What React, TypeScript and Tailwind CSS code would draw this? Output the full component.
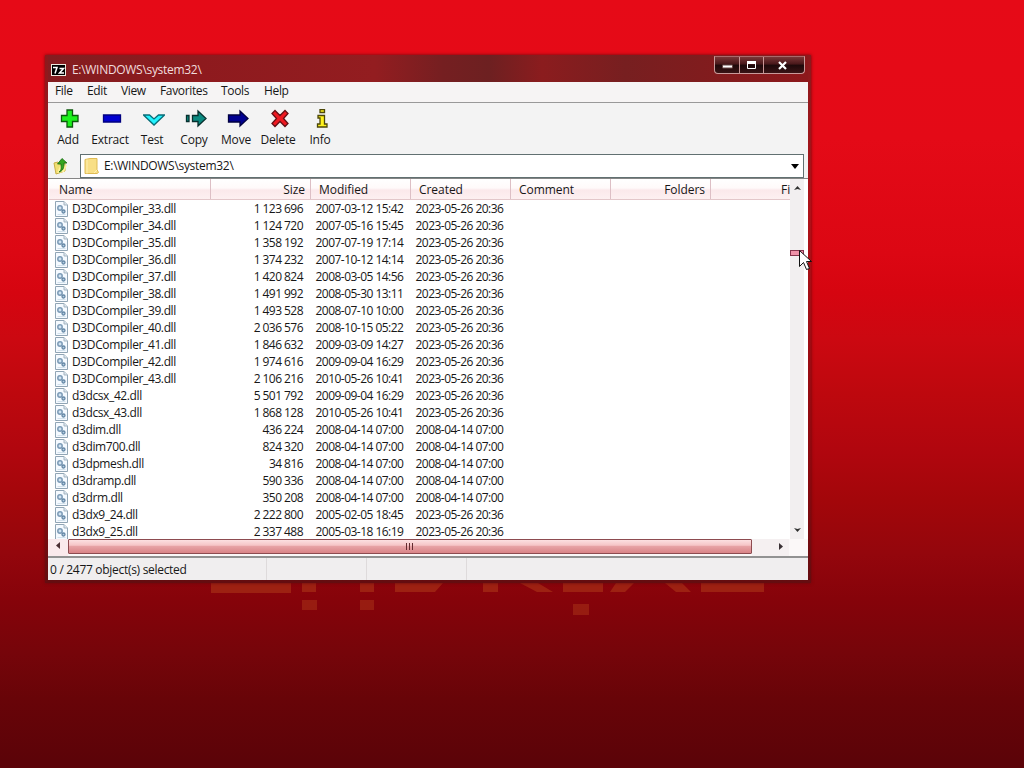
import React from 'react';

const files = [
  ['D3DCompiler_33.dll', '1 123 696', '2007-03-12 15:42', '2023-05-26 20:36'],
  ['D3DCompiler_34.dll', '1 124 720', '2007-05-16 15:45', '2023-05-26 20:36'],
  ['D3DCompiler_35.dll', '1 358 192', '2007-07-19 17:14', '2023-05-26 20:36'],
  ['D3DCompiler_36.dll', '1 374 232', '2007-10-12 14:14', '2023-05-26 20:36'],
  ['D3DCompiler_37.dll', '1 420 824', '2008-03-05 14:56', '2023-05-26 20:36'],
  ['D3DCompiler_38.dll', '1 491 992', '2008-05-30 13:11', '2023-05-26 20:36'],
  ['D3DCompiler_39.dll', '1 493 528', '2008-07-10 10:00', '2023-05-26 20:36'],
  ['D3DCompiler_40.dll', '2 036 576', '2008-10-15 05:22', '2023-05-26 20:36'],
  ['D3DCompiler_41.dll', '1 846 632', '2009-03-09 14:27', '2023-05-26 20:36'],
  ['D3DCompiler_42.dll', '1 974 616', '2009-09-04 16:29', '2023-05-26 20:36'],
  ['D3DCompiler_43.dll', '2 106 216', '2010-05-26 10:41', '2023-05-26 20:36'],
  ['d3dcsx_42.dll', '5 501 792', '2009-09-04 16:29', '2023-05-26 20:36'],
  ['d3dcsx_43.dll', '1 868 128', '2010-05-26 10:41', '2023-05-26 20:36'],
  ['d3dim.dll', '436 224', '2008-04-14 07:00', '2008-04-14 07:00'],
  ['d3dim700.dll', '824 320', '2008-04-14 07:00', '2008-04-14 07:00'],
  ['d3dpmesh.dll', '34 816', '2008-04-14 07:00', '2008-04-14 07:00'],
  ['d3dramp.dll', '590 336', '2008-04-14 07:00', '2008-04-14 07:00'],
  ['d3drm.dll', '350 208', '2008-04-14 07:00', '2008-04-14 07:00'],
  ['d3dx9_24.dll', '2 222 800', '2005-02-05 18:45', '2023-05-26 20:36'],
  ['d3dx9_25.dll', '2 337 488', '2005-03-18 16:19', '2023-05-26 20:36'],
];

const menus = [
  { label: 'File', width: 'w-8' },
  { label: 'Edit', width: 'w-[34px]' },
  { label: 'View', width: 'w-[39px]' },
  { label: 'Favorites', width: 'w-[61px]' },
  { label: 'Tools', width: 'w-[43px]' },
  { label: 'Help', width: 'w-10' },
];

const tools = [
  { label: 'Add', icon: <path d="M8 1h5.500v5.500H19v6h-5.500V18H8v-5.500H2.500v-6H8z" fill="#1df01d" /> },
  { label: 'Extract', icon: <path d="M2.500 6h17v7h-17z" fill="#0000d0" stroke="#000080" /> },
  { label: 'Test', icon: <path d="M.5 6h6l4.500 4 4.500-4h6L11 16z" fill="#22f4ff" stroke="#086d78" /> },
  { label: 'Copy', icon: <path d="M1.500 6.500H4v6H1.500zM7.500 6.500H13V2l8 7.500-8 7.500v-4.500H7.500z" fill="#0b8a80" stroke="#062f2d" /> },
  { label: 'Move', icon: <path d="M1.500 6H13V2l8 7.500-8 7.500v-4H1.500z" fill="#000090" stroke="#000040" /> },
  { label: 'Delete', icon: <path d="M6 1.500l5 5 5-5 3 3-4.500 5 4.500 5-3 3-5-5-5 5-3-3 4.500-5L3 4.500z" fill="#f01820" stroke="#651015" /> },
  { label: 'Info', icon: <path d="M9 .5h4.500v3H9zM7 6.500h6.500v8.500h2.500v3H6.500v-3H9V9H7z" fill="#fff21d" stroke="#4c4708" /> },
];

const DllIcon = () => (
  <svg className="shrink-0" width="13" height="16" viewBox="0 0 13 16">
    <path d="M.5.5h8.500l3.500 3.500v11.500H.5z" fill="#f5faff" stroke="#91a5b5" />
    <path d="M9 .5v3.500h3.500" fill="#dce8f0" stroke="#a5b4c0" />
    <circle cx="5" cy="7" r="2.200" fill="#d2e4f2" stroke="#7b9ab6" strokeWidth="1.500" />
    <circle cx="8.500" cy="10.500" r="1.500" fill="#b5cee2" stroke="#6688a6" strokeWidth="1.300" />
    <path d="M2.500 13.500h8" stroke="#d2e1ec" />
  </svg>
);

// What is left visible of the wallpaper lettering under the window
const Wallpaper = () => (
  <svg className="absolute left-[200px] top-[582px]" width="580" height="40" viewBox="0 0 580 40" fill="#ac3518">
    <path
      opacity=".6"
      d="M11 1h80v10H11zM102 1h14v9h-14zM160 1h14v9h-14zM195 1h48l-8 9h-40zM283 1h15v9h-15zM320 1h18l15 9h-16zM363 1h40v9h-40zM416 1h18l-9 9h-15zM465 1h17l9 9h-15zM501 1h63v9h-63z"
    />
    <path opacity=".5" d="M102 18h15v10h-15zM160 18h14v10h-14zM373 22h16v11h-16z" />
  </svg>
);

const TitleBar = () => (
  <div className="flex h-[27px] items-start justify-between bg-[linear-gradient(90deg,#841d20_0%,#8e1a1e_20%,#931d20_43%,#751f21_52%,#6d2021_58%,#8b1c1e_65%,#771f20_76%,#8d181b_100%)] pl-[3px] pr-[3px]">
    <div className="flex items-center pt-[7px]">
      <svg width="15" height="12" viewBox="0 0 15 12">
        <path d="M0 0h15v12H0z" fill="#eeeade" />
        <path d="M1 1h13v10H1z" fill="#000" />
        <path d="M2 3.500h4L4 9.500M8.500 4.500h4l-4 4.500h4.500" fill="none" stroke="#fff" strokeWidth="1.500" />
      </svg>
      <span className="ml-1.5 whitespace-nowrap text-[12px] leading-4 tracking-[-0.3px] text-[#f1dddd]">E:\WINDOWS\system32\</span>
    </div>
    <div className="mt-px flex h-[18px] w-[91px] rounded-b-[4px] border border-[#c99a9a] border-t-[#a96a6b] bg-[linear-gradient(#7b3738,#471719_45%,#1d090a_50%,#391315)]">
      <div className="flex w-[25px] items-center justify-center border-r border-[#c89696] pt-0.5">
        <svg width="11" height="5"><path d="M.5 1h10v3H.5z" fill="#fff" stroke="#684747" /></svg>
      </div>
      <div className="flex w-6 items-center justify-center border-r border-[#c89696]">
        <svg width="11" height="9"><path d="M1.500 2h8v5.500h-8z" fill="none" stroke="#fff" /><path d="M1 0h9v3H1z" fill="#fff" /></svg>
      </div>
      <div className="flex flex-1 items-center justify-center pr-1">
        <svg width="11" height="9"><path d="M2 1l7 7M9 1L2 8" stroke="#fff" strokeWidth="2.200" /></svg>
      </div>
    </div>
  </div>
);

const AddressBar = () => (
  <div className="flex h-[25px] bg-[#f3f3f3] pr-1 pt-px">
    <div className="flex w-8 items-center pl-[5px]">
      <svg width="17" height="18" viewBox="0 0 17 18">
        <path d="M1 6l4-1 1 2 6-1v8l-9 3z" fill="#f0df75" stroke="#c9ae45" />
        <path d="M4 16l3-7 7-1-3 7z" fill="#fff19a" />
        <path d="M6 15c3-2 2-5 2-8H4.500L9 1.500 14 6h-3c0 5-1 8-5 9z" fill="#35a51f" stroke="#176b12" strokeWidth=".8" />
      </svg>
    </div>
    <div className="flex flex-1 items-center justify-between border border-[#617071] bg-white pl-[3px] pr-1">
      <div className="flex items-center">
        <svg width="15" height="16" viewBox="0 0 15 16">
          <path d="M1 1.500L6 .5h7v11l1.500 3-1.500 1H1z" fill="#f8df86" stroke="#dfbb54" />
          <path d="M3 1.500v14M10 15l3-3" stroke="#fff0af" />
        </svg>
        <span className="ml-[5px] text-[12px] leading-4 tracking-[-0.3px]">E:\WINDOWS\system32\</span>
      </div>
      <svg width="8" height="5"><path d="M0 0h8L4 5z" fill="#000" /></svg>
    </div>
  </div>
);

const headCell = 'shrink-0 border-r border-[#ddbfc5] pt-[3px]';

const FileList = () => (
  <div className="flex h-[361px] border-t border-[#858585] bg-white">
    <div className="w-[742px] overflow-hidden pl-px">
      <div className="flex h-[21px] w-[762px] border-b border-[#e3c7ca] bg-[linear-gradient(#fff_0%,#fffafa_45%,#fbe9eb_55%,#fdf0f1_100%)] text-[12px] leading-4 tracking-[-0.05px]">
        <div className={`${headCell} w-[162px] pl-2.5`}>Name</div>
        <div className={`${headCell} w-[100px] pr-[5px] text-right`}>Size</div>
        <div className={`${headCell} w-[100px] pl-2`}>Modified</div>
        <div className={`${headCell} w-[100px] pl-2`}>Created</div>
        <div className={`${headCell} w-[100px] pl-2`}>Comment</div>
        <div className={`${headCell} w-[100px] pr-[5px] text-right`}>Folders</div>
        <div className="shrink-0 pl-[70px] pt-[3px]">Files</div>
      </div>
      {files.map(([name, size, modified, created]) => (
        <div key={name} className="flex h-[17px] items-center whitespace-nowrap text-[12px] leading-[17px]">
          <div className="flex w-[162px] items-center gap-1 pl-1.5 tracking-[-0.38px]">
            <DllIcon />
            {name}
          </div>
          <div className="w-[92px] text-right tracking-[-0.55px]">{size}</div>
          <div className="w-[100px] pl-[12.5px] tracking-[-0.53px]">{modified}</div>
          <div className="w-[100px] pl-[12.5px] tracking-[-0.53px]">{created}</div>
        </div>
      ))}
    </div>
    <div className="flex h-[360px] w-[14px] flex-col items-center bg-[#f2eff0]">
      <svg className="mt-[7px]" width="7" height="5"><path d="M0 4l3.500-4L7 4 3.500 3z" fill="#303030" /></svg>
      <div className="mt-[59px] h-1.5 w-[14px] border border-[#85334b] bg-[#ef91a8]" />
      <svg className="mb-1.5 mt-auto" width="7" height="5"><path d="M0 0l3.500 4L7 0 3.500 1z" fill="#303030" /></svg>
    </div>
  </div>
);

const HorizontalScroll = () => (
  <div className="flex h-[17px] bg-[#fbf8f8]">
    <div className="flex w-5 items-center justify-center bg-[#faeaec] pb-1">
      <svg width="5" height="7"><path d="M4 0v7L0 3.500z" fill="#4b3034" /></svg>
    </div>
    <div className="flex h-[15px] w-[684px] items-center justify-center gap-0.5 rounded-[1px] border border-[#8d4b50] bg-[linear-gradient(#fce0e1_0%,#f6c5c7_40%,#e7a2a5_50%,#d98487_100%)] pr-0.5">
      <i className="h-[7px] w-px bg-[#632b30]" />
      <i className="h-[7px] w-px bg-[#632b30]" />
      <i className="h-[7px] w-px bg-[#632b30]" />
    </div>
    <div className="flex w-[37px] items-center bg-[#f5f0f1] pb-0.5 pl-[27px]">
      <svg width="5" height="7"><path d="M0 0l4 3.500L0 7z" fill="#393034" /></svg>
    </div>
  </div>
);

export default function App() {
  return (
    <div className="relative h-[768px] w-[1024px] overflow-hidden bg-[linear-gradient(#e60a17_0%,#e40a17_18%,#dc0713_33%,#d60510_38%,#cc0811_44%,#be080e_51%,#b0060e_59%,#a3060a_65%,#94060c_72%,#86030a_78%,#76050a_85%,#680408_91%,#5c0308_99%)] pl-[45px] pt-[55px] font-['Open_Sans','Noto_Sans',sans-serif] text-[#171717]">
      <Wallpaper />
      <div className="relative h-[528px] w-[766px] bg-[linear-gradient(#8b1a1d,#b01118_30%,#8b080e_80%,#640d10)] px-[3px] shadow-[0_0_3px_#63090d]">
        <TitleBar />
        <div className="h-[498px] bg-[#f2f2f2]">
          {/* Menu */}
          <div className="flex h-[21px] border-b border-[#999] bg-[#f6f4f4] pl-[7px] pt-px text-[12px] leading-4 tracking-[-0.35px]">
            {menus.map(m => (
              <div key={m.label} className={`${m.width} shrink-0 whitespace-nowrap`}>{m.label}</div>
            ))}
          </div>
          {/* Toolbar */}
          <div className="flex h-[50px] bg-[#f3f3f3] pt-1.5">
            {tools.map(t => (
              <div key={t.label} className="flex w-[42px] flex-col items-center pr-0.5 text-[12px] tracking-[-0.2px]">
                <svg className="ml-[3px] shrink-0" width="22" height="19" viewBox="0 0 22 19" stroke="#0c5a0c" strokeWidth="1.300">{t.icon}</svg>
                <span className="mt-[3px] whitespace-nowrap leading-[18px]">{t.label}</span>
              </div>
            ))}
          </div>
          <AddressBar />
          <FileList />
          <HorizontalScroll />
          {/* Status bar */}
          <div className="flex h-6 border-t-2 border-[#929292] bg-[#f0eeef] text-[12px] leading-6 tracking-[-0.3px]">
            <div className="w-[219px] border-r border-[#dedadb] pl-0.5">0 / 2477 object(s) selected</div>
            <div className="w-[100px] border-r border-[#dedadb]" />
            <div className="w-[100px] border-r border-[#dedadb]" />
          </div>
        </div>
      </div>
      <svg className="absolute left-[799px] top-[250px]" width="13" height="21" viewBox="0 0 13 21">
        <path d="M.5.5v16l4-4 3 7 3-1-3-7h5z" fill="#fff" stroke="#111" />
      </svg>
    </div>
  );
}
